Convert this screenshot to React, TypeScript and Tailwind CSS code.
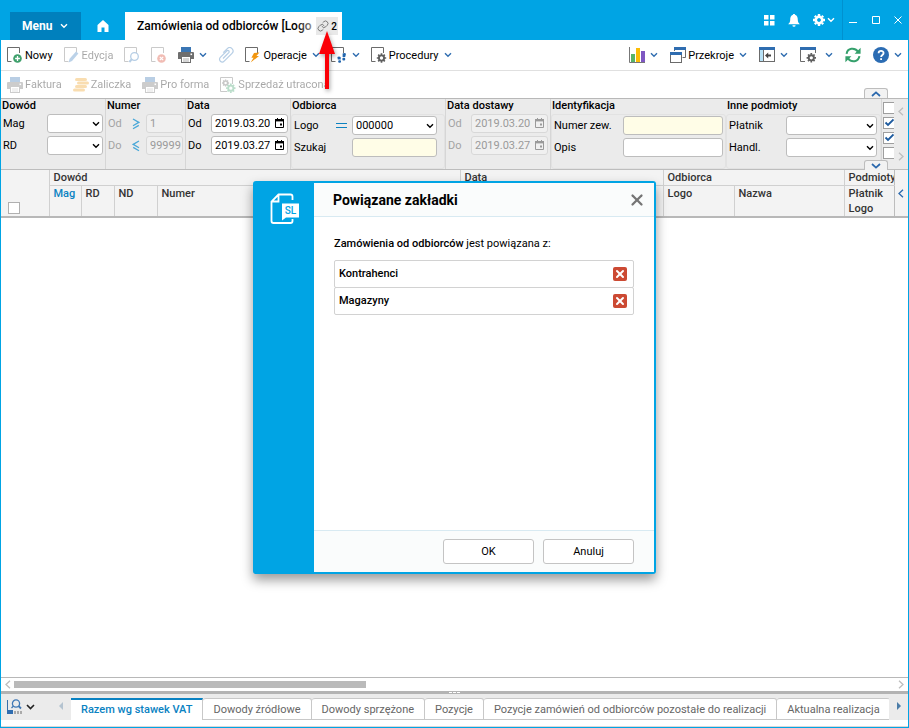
import type { ReactNode } from "react";
import clsx from "clsx";
import { Link, X } from "lucide-react";

// --- Icons ---
function Chevron({ className = "text-[#2f6db0]" }: { className?: string }) {
  return (
    <svg width="8" height="6" viewBox="0 0 8 6" fill="none" className={clsx("shrink-0", className)}>
      <path d="M1 1.2 L4 4.2 L7 1.2" stroke="currentColor" strokeWidth="1.4" />
    </svg>
  );
}

function AngleIcon({ flip, className }: { flip?: boolean; className?: string }) {
  return (
    <svg width="6" height="9" viewBox="0 0 6 9" fill="none" className={clsx("shrink-0", className)}>
      <path d={flip ? "M1 0.8 L5 4.5 L1 8.2" : "M5 0.8 L1 4.5 L5 8.2"} stroke="currentColor" strokeWidth="1.3" />
    </svg>
  );
}

function Icon({ children }: { children: ReactNode }) {
  return (
    <svg width="16" height="16" viewBox="0 0 16 16" fill="none" className="shrink-0">
      {children}
    </svg>
  );
}

const Page = () => (
  <path d="M4.5 14.5 H0.5 V0.5 H12.5 V6" stroke="#6b6b6b" strokeWidth="1" />
);

const NewIcon = () => (
  <Icon>
    <Page />
    <circle cx="10.5" cy="11.5" r="4.3" fill="#3fa06c" />
    <path d="M8.1 11.5 H12.9 M10.5 9.1 V13.9" stroke="#fff" strokeWidth="1.3" />
  </Icon>
);

const EditIcon = () => (
  <Icon>
    <Page />
    <path d="M4.6 15.4 L5.6 11.8 L12 4.6 L14.4 6.6 L8 14 Z" fill="#3f7fc0" />
  </Icon>
);

const SearchIcon = () => (
  <Icon>
    <Page />
    <circle cx="10.5" cy="9.5" r="3.8" stroke="#2f73b5" strokeWidth="1.3" />
    <path d="M7.8 12.2 L5.4 15" stroke="#2f73b5" strokeWidth="2" />
  </Icon>
);

const DeleteIcon = () => (
  <Icon>
    <Page />
    <circle cx="10.5" cy="11.5" r="4.3" fill="#d8432c" />
    <path d="M8.8 9.8 L12.2 13.2 M12.2 9.8 L8.8 13.2" stroke="#fff" strokeWidth="1.2" />
  </Icon>
);

const PrinterIcon = () => (
  <Icon>
    <rect x="3" y="0" width="10" height="5" fill="#3a76b4" />
    <path d="M1 5 H15 Q16 5 16 6 V12 H0 V6 Q0 5 1 5 Z" fill="#6e6e6e" />
    <rect x="12.5" y="6.5" width="1.6" height="1.6" fill="#fff" />
    <rect x="3.5" y="9.5" width="9" height="6" fill="#fff" stroke="#6e6e6e" />
    <path d="M5 12 H11 M5 14 H11" stroke="#9a9a9a" strokeWidth="0.8" />
  </Icon>
);

const ClipIcon = () => (
  <Icon>
    <path
      d="M5 11.5 L11 5.3 A1.3 1.3 0 0 0 9.2 3.6 L2.3 10.4 A2.7 2.7 0 0 0 6.2 14.2 L14 6.3 A3.3 3.3 0 0 0 9.3 1.6 L5.2 5.7"
      stroke="#2f73b5"
      strokeWidth="1.2"
    />
  </Icon>
);

const BoltIcon = () => (
  <Icon>
    <Page />
    <path d="M9 6 L14.4 5.4 L11.4 9 H14 L5.6 15.6 L8.6 10.8 H6.4 Z" fill="#f2960f" />
  </Icon>
);

const StepsIcon = () => (
  <Icon>
    <Page />
    <g fill="#2266ae">
      <path d="M6.4 10 Q8 9 9.6 10 L9.8 12.6 H6.8 Z" />
      <rect x="7.2" y="13.2" width="2.8" height="2.6" rx="1" />
      <path d="M11.6 6.6 Q13.6 5.2 15 6.8 L14.2 10 H11.6 Z" />
      <rect x="11.4" y="10.8" width="2.8" height="2.6" rx="1" />
    </g>
  </Icon>
);

const Cog = ({ x, y, color = "#5f5f5f" }: { x: number; y: number; color?: string }) => (
  <g transform={`translate(${x} ${y})`}>
    <circle r="2.6" stroke={color} strokeWidth="1.9" fill="none" />
    <path
      d="M0 -4.7 V-3 M0 3 V4.7 M-4.7 0 H-3 M3 0 H4.7 M-3.3 -3.3 L-2.1 -2.1 M2.1 2.1 L3.3 3.3 M-3.3 3.3 L-2.1 2.1 M2.1 -2.1 L3.3 -3.3"
      stroke={color}
      strokeWidth="1.7"
    />
  </g>
);

const ProcedureIcon = () => (
  <Icon>
    <Page />
    <Cog x={10.5} y={11} />
  </Icon>
);

const ChartIcon = () => (
  <Icon>
    <path d="M0.5 0 V15.5 H16" stroke="#777" />
    <rect x="2" y="7" width="4" height="8" fill="#58b368" />
    <rect x="7" y="1" width="4" height="14" fill="#fbbc05" />
    <rect x="12" y="4" width="4" height="11" fill="#7e57c2" />
  </Icon>
);

const WindowsIcon = () => (
  <Icon>
    <path d="M4.5 4 V0.5 H15.5 V10.5 H12.5" stroke="#6b6b6b" />
    <rect x="4" y="0" width="12" height="3" fill="#2f6db0" />
    <rect x="0.5" y="5.5" width="11" height="10" fill="#fff" stroke="#6b6b6b" />
    <rect x="0" y="5" width="12" height="3" fill="#2f6db0" />
  </Icon>
);

const PanelIcon = () => (
  <Icon>
    <rect x="0.5" y="0.5" width="15" height="14" fill="#fff" stroke="#6b6b6b" />
    <rect x="1" y="3" width="3" height="11" fill="#b8e2f7" />
    <rect x="0" y="0" width="16" height="3" fill="#2f6db0" />
    <path d="M4.5 3 V14" stroke="#6b6b6b" />
    <path d="M6 8.5 L9.2 5.6 V7.6 H12 V9.4 H9.2 V11.4 Z" fill="#444" />
  </Icon>
);

const WindowGearIcon = () => (
  <Icon>
    <path d="M5 14.5 H0.5 V1 M15.5 1 V6" stroke="#6b6b6b" />
    <rect x="0" y="0" width="16" height="3" fill="#2f6db0" />
    <Cog x={11.3} y={10.8} />
  </Icon>
);

const RefreshIcon = () => (
  <Icon>
    <path d="M1.6 6.8 C2.5 1 9.5 0 13 4.6 M14.4 9.2 C13.5 15 6.5 16 3 11.4" stroke="#35a06c" strokeWidth="2" />
    <path d="M15.6 0.8 V6.8 H9.6 Z M0.4 15.2 V9.2 H6.4 Z" fill="#35a06c" />
  </Icon>
);

const HelpIcon = () => (
  <Icon>
    <circle cx="8" cy="8" r="8" fill="#2b6cb3" />
    <path d="M5.6 6.2 C5.6 3.2 10.6 3.2 10.6 6 C10.6 8 8.1 7.9 8.1 10" stroke="#fff" strokeWidth="1.8" />
    <rect x="7.2" y="11.2" width="1.8" height="1.8" fill="#fff" />
  </Icon>
);

const CoinsIcon = () => (
  <Icon>
    <g fill="#f0a020">
      <rect x="2" y="1" width="12" height="3" rx="1.5" />
      <rect x="4" y="4.5" width="12" height="3" rx="1.5" />
      <rect x="2" y="8" width="12" height="3" rx="1.5" />
      <rect x="0" y="11.5" width="12" height="3" rx="1.5" />
    </g>
  </Icon>
);

const LostSaleIcon = () => (
  <Icon>
    <path d="M7 14.5 H0.5 V0.5 H12.5 V7" stroke="#6b6b6b" />
    <g transform="translate(5.6 6) scale(0.75)">
      <Cog x={0} y={0} />
    </g>
    <Cog x={10.8} y={11.2} color="#3fa06c" />
  </Icon>
);

const CalendarIcon = () => (
  <svg
    width="9"
    height="10"
    viewBox="0 0 9 10"
    fill="none"
    className="pointer-events-none absolute top-1 right-1"
  >
    <path d="M0.5 1.5 H8.5 V9.5 H0.5 Z M2.5 0 V2 M6.5 0 V2" stroke="currentColor" />
    <path d="M0 1 H9 V3.4 H0 Z" fill="currentColor" />
    <rect x="5" y="5.5" width="2" height="2" fill="currentColor" />
  </svg>
);

const CompareIcon = ({ less }: { less?: boolean }) => (
  <svg width="8" height="12" viewBox="0 0 8 12" fill="none" className="shrink-0">
    <g transform={less ? "matrix(-1 0 0 1 8 0)" : undefined} stroke="#4aa8d8" strokeWidth="1.3">
      <path d="M1 1 L6.8 4.4 L1 7.8 M1 10.8 L6.8 7.4" />
    </g>
  </svg>
);

const EqualsIcon = () => (
  <svg width="11" height="5" viewBox="0 0 11 5" fill="#0d82c0" className="shrink-0">
    <path d="M0 0 H11 V1 H0 Z M0 4 H11 V5 H0 Z" />
  </svg>
);

const DocumentLogo = () => (
  <svg width="30" height="32" viewBox="0 0 30 32" fill="none">
    <path
      d="M22.5 7 V3.5 Q22.5 1.5 20.5 1.5 H8.5 L1.5 8.5 V28 Q1.5 30 3.5 30 H20.5 Q22.5 30 22.5 28 V26 M8.5 1.5 V8.5 H1.5"
      stroke="#fff"
      strokeWidth="1.8"
    />
    <path d="M12 10.5 H29 V24.5 H16 L12 27.5 Z" fill="#fff" />
    <text x="20.5" y="21" textAnchor="middle" fontSize="10" fontWeight="500" fill="#00a4e4">
      SL
    </text>
  </svg>
);

// --- Toolbar ---
interface ToolProps {
  label: string;
  icon?: ReactNode;
  showLabel?: boolean;
  disabled?: boolean;
  menu?: boolean;
}

function Tool({ label, icon, showLabel, disabled, menu }: ToolProps) {
  return (
    <button
      type="button"
      aria-label={label}
      disabled={disabled}
      className="flex shrink-0 items-center whitespace-nowrap disabled:opacity-35"
    >
      {icon}
      {showLabel && <span className="ml-[2px] pt-[2px]">{label}</span>}
      {menu && <Chevron className="ml-[5px] text-[#2f6db0]" />}
    </button>
  );
}

// --- Filter fields ---
const fieldClass =
  "block h-[19px] w-full rounded-[3px] border border-[#bdbdbd] pl-[3px] text-[11px] leading-4 text-black disabled:border-[#d8d8d8] disabled:bg-[#f0f0f0] disabled:text-[#9a9a9a]";

interface GroupProps {
  title: string;
  className: string;
  boxed?: boolean;
  bodyClass?: string;
  children: ReactNode;
}

function Group({ title, className, boxed, bodyClass, children }: GroupProps) {
  return (
    <div role="group" aria-label={title} className={clsx("flex shrink-0 flex-col border-[#d6d6d6]", className)}>
      <div className="h-[15px] shrink-0 pl-px leading-[13px] font-medium whitespace-nowrap">{title}</div>
      <div
        className={clsx(
          "flex flex-1 flex-col gap-[3px]",
          boxed && "rounded-[3px] border border-[#e2e2e2] pt-px",
          bodyClass
        )}
      >
        {children}
      </div>
    </div>
  );
}

interface FieldProps {
  label: string;
  id: string;
  width: string;
  sign?: ReactNode;
  muted?: boolean;
  children: ReactNode;
}

function Field({ label, id, width, sign, muted, children }: FieldProps) {
  return (
    <div className="flex items-center pr-[2px] pl-[2px]">
      <label htmlFor={id} className={clsx("flex-1 pt-px whitespace-nowrap", muted && "text-[#a3a3a3]")}>
        {label}
      </label>
      {sign}
      <div className={clsx("relative shrink-0", width)}>{children}</div>
    </div>
  );
}

function Select({ id, value = "" }: { id: string; value?: string }) {
  return (
    <>
      <select id={id} className={clsx(fieldClass, "appearance-none bg-white")} defaultValue={value}>
        <option value={value}>{value}</option>
      </select>
      <Chevron className="pointer-events-none absolute top-[7px] right-[3px] text-black" />
    </>
  );
}

function DateField({ id, value, disabled }: { id: string; value: string; disabled?: boolean }) {
  return (
    <div className={disabled ? "text-[#9a9a9a]" : "text-black"}>
      <input id={id} type="text" defaultValue={value} disabled={disabled} className={clsx(fieldClass, "bg-white")} />
      <CalendarIcon />
    </div>
  );
}

function Check({ label, checked }: { label: string; checked?: boolean }) {
  return (
    <label className="relative block h-3 w-3 shrink-0">
      <input
        type="checkbox"
        aria-label={label}
        defaultChecked={checked}
        className="peer block h-3 w-3 appearance-none border border-[#9e9e9e] bg-white"
      />
      <svg
        width="12"
        height="12"
        viewBox="0 0 12 12"
        fill="none"
        className="pointer-events-none absolute inset-0 hidden peer-checked:block"
      >
        <path d="M2.5 5.5 L5 8 L10.5 2.5" stroke="#1d5a9e" strokeWidth="1.8" />
      </svg>
    </label>
  );
}

function Notch({ up }: { up?: boolean }) {
  return (
    <button
      type="button"
      aria-label={up ? "Zwiń" : "Rozwiń"}
      className="flex h-[10px] w-6 items-center justify-center rounded-t-[3px] border border-b-0 border-[#bdbdbd] bg-[#f2f2f2]"
    >
      <svg width="10" height="6" viewBox="0 0 10 6" fill="none">
        <path d={up ? "M1 5 L5 1.4 L9 5" : "M1 1 L5 4.6 L9 1"} stroke="#2a68ad" strokeWidth="1.7" />
      </svg>
    </button>
  );
}

// --- Main blocks ---
function TitleBar() {
  return (
    <header className="flex h-10 items-end bg-[#00a4e4] pl-[9px] text-white">
      <button type="button" className="flex h-7 w-[71px] shrink-0 items-center bg-[#0080bd] pl-3 text-xs font-bold">
        Menu
        <Chevron className="ml-2 text-white" />
      </button>
      <button type="button" aria-label="Start" className="flex h-7 w-11 shrink-0 items-center justify-center">
        <svg width="12" height="12" viewBox="0 0 12 12" fill="#fff">
          <path d="M6 0 L11.5 5 V12 H7.5 V7.5 H4.5 V12 H0.5 V5 Z" />
        </svg>
      </button>
      <div className="flex h-7 w-[217px] shrink-0 items-center bg-white pr-1 pl-3 text-black">
        <div className="relative flex-1 overflow-hidden text-xs font-medium whitespace-nowrap">
          Zamówienia od odbiorców [Logo
          <div className="absolute inset-y-0 right-0 w-5 bg-linear-to-r from-transparent to-white/70" />
        </div>
        <button
          type="button"
          className="flex h-[18px] w-[22px] shrink-0 items-center justify-center gap-[2px] bg-[#e9e9e9] text-[10px] font-medium"
        >
          <Link size={12} strokeWidth={2} className="text-[#7a7a7a]" />2
        </button>
      </div>
      <div className="ml-auto flex h-10 items-center">
        <button type="button" aria-label="Aplikacje" className="mr-[13px]">
          <svg width="11" height="11" viewBox="0 0 11 11" fill="#fff">
            <path d="M0 0 H4.5 V4.5 H0 Z M6 0 H10.5 V4.5 H6 Z M0 6 H4.5 V10.5 H0 Z M6 6 H10.5 V10.5 H6 Z" />
          </svg>
        </button>
        <button type="button" aria-label="Powiadomienia" className="mr-[13px]">
          <svg width="12" height="13" viewBox="0 0 12 13" fill="#fff">
            <path d="M5 0.8 A1 1 0 0 1 7 0.8 C9.3 1.5 9.8 3.4 9.8 6 C9.8 8 10.6 9 11.8 10.3 H0.2 C1.4 9 2.2 8 2.2 6 C2.2 3.4 2.7 1.5 5 0.8 Z M4.4 11.2 H7.6 A1.6 1.6 0 0 1 4.4 11.2 Z" />
          </svg>
        </button>
        <button type="button" aria-label="Ustawienia" className="mr-[7px] flex items-center gap-[2px]">
          <svg width="12" height="12" viewBox="-6 -6 12 12" fill="none">
            <circle r="3.2" stroke="#fff" strokeWidth="2.6" />
            <path
              d="M0 -6 V-4 M0 4 V6 M-6 0 H-4 M4 0 H6 M-4.2 -4.2 L-3 -3 M3 3 L4.2 4.2 M-4.2 4.2 L-3 3 M3 -3 L4.2 -4.2"
              stroke="#fff"
              strokeWidth="2.4"
            />
          </svg>
          <Chevron className="text-white" />
        </button>
        <div className="flex h-10 w-[66px] items-center justify-between border-l border-[#0091cf] pr-[6px] pl-[6px]">
          <button type="button" aria-label="Minimalizuj">
            <svg width="8" height="8" viewBox="0 0 8 8" stroke="#fff">
              <path d="M0 6.5 H8" />
            </svg>
          </button>
          <button type="button" aria-label="Maksymalizuj">
            <svg width="8" height="9" viewBox="0 0 8 9" fill="none" stroke="#fff">
              <path d="M0.5 0.5 H7.5 V7.5 H0.5 Z" />
            </svg>
          </button>
          <button type="button" aria-label="Zamknij okno">
            <svg width="8" height="8" viewBox="0 0 8 8" stroke="#fff">
              <path d="M0.5 0.5 L7.5 7.5 M7.5 0.5 L0.5 7.5" />
            </svg>
          </button>
        </div>
      </div>
    </header>
  );
}

function Toolbars() {
  return (
    <>
      <div className="flex h-[31px] items-center justify-between border-b border-[#e0e0e0] px-[6px]">
        <div className="flex items-center gap-[11px]">
          <Tool label="Nowy" icon={<NewIcon />} showLabel />
          <Tool label="Edycja" icon={<EditIcon />} showLabel disabled />
          <Tool label="Podgląd" icon={<SearchIcon />} disabled />
          <Tool label="Usuń" icon={<DeleteIcon />} disabled />
          <div className="flex items-center">
            <Tool label="Drukuj" icon={<PrinterIcon />} />
            <Tool label="Opcje drukowania" menu />
          </div>
          <Tool label="Załączniki" icon={<ClipIcon />} disabled />
          <Tool label="Operacje" icon={<BoltIcon />} showLabel menu />
          <Tool label="Ścieżka" icon={<StepsIcon />} menu />
          <Tool label="Procedury" icon={<ProcedureIcon />} showLabel menu />
        </div>
        <div className="flex items-center gap-3">
          <Tool label="Wykres" icon={<ChartIcon />} menu />
          <Tool label="Przekroje" icon={<WindowsIcon />} showLabel menu />
          <Tool label="Panele" icon={<PanelIcon />} menu />
          <div className="flex items-center gap-1">
            <Tool label="Ustawienia okna" icon={<WindowGearIcon />} />
            <Tool label="Opcje okna" menu />
          </div>
          <Tool label="Odśwież" icon={<RefreshIcon />} />
          <Tool label="Pomoc" icon={<HelpIcon />} menu />
        </div>
      </div>
      <div className="flex h-7 items-center justify-between border-b border-[#b8b8b8] px-[6px]">
        <div className="flex items-center gap-[11px]">
          <Tool label="Faktura" icon={<PrinterIcon />} showLabel disabled />
          <Tool label="Zaliczka" icon={<CoinsIcon />} showLabel disabled />
          <Tool label="Pro forma" icon={<PrinterIcon />} showLabel disabled />
          <Tool label="Sprzedaż utracona" icon={<LostSaleIcon />} showLabel disabled />
        </div>
        <div className="mr-[14px] self-end">
          <Notch up />
        </div>
      </div>
    </>
  );
}

function Filters() {
  return (
    <form className="flex h-[71px] border-b border-[#bdbdbd] bg-[#ebebeb]">
      <Group title="Dowód" className="w-[105px] border-r">
        <Field label="Mag" id="mag" width="w-14">
          <Select id="mag" />
        </Field>
        <Field label="RD" id="rd" width="w-14">
          <Select id="rd" />
        </Field>
      </Group>
      <Group title="Numer" className="w-20 border-r">
        <Field label="Od" id="num-from" width="ml-[6px] w-[37px]" sign={<CompareIcon />} muted>
          <input id="num-from" type="text" defaultValue="1" disabled className={fieldClass} />
        </Field>
        <Field label="Do" id="num-to" width="ml-[6px] w-[37px]" sign={<CompareIcon less />} muted>
          <input id="num-to" type="text" defaultValue="99999" disabled className={fieldClass} />
        </Field>
      </Group>
      <Group title="Data" className="w-[105px] border-r">
        <Field label="Od" id="date-from" width="w-[77px]">
          <DateField id="date-from" value="2019.03.20" />
        </Field>
        <Field label="Do" id="date-to" width="w-[77px]">
          <DateField id="date-to" value="2019.03.27" />
        </Field>
      </Group>
      <Group title="Odbiorca" className="w-[155px] border-r" boxed bodyClass="pr-[5px]">
        <Field label="Logo" id="logo" width="ml-[5px] w-[85px]" sign={<EqualsIcon />}>
          <Select id="logo" value="000000" />
        </Field>
        <Field label="Szukaj" id="search" width="w-[85px]">
          <input id="search" type="text" className={clsx(fieldClass, "bg-[#fffde7]")} />
        </Field>
      </Group>
      <Group title="Data dostawy" className="w-[105px] border-r">
        <Field label="Od" id="delivery-from" width="w-[77px]" muted>
          <DateField id="delivery-from" value="2019.03.20" disabled />
        </Field>
        <Field label="Do" id="delivery-to" width="w-[77px]" muted>
          <DateField id="delivery-to" value="2019.03.27" disabled />
        </Field>
      </Group>
      <Group title="Identyfikacja" className="w-[175px]" boxed>
        <Field label="Numer zew." id="ext-number" width="w-[100px]">
          <input id="ext-number" type="text" className={clsx(fieldClass, "bg-[#fffde7]")} />
        </Field>
        <Field label="Opis" id="description" width="w-[100px]">
          <input id="description" type="text" className={clsx(fieldClass, "bg-white")} />
        </Field>
      </Group>
      <Group title="Inne podmioty" className="w-[155px]" boxed bodyClass="pr-px">
        <Field label="Płatnik" id="payer" width="w-[91px]">
          <Select id="payer" />
        </Field>
        <Field label="Handl." id="trader" width="w-[91px]">
          <Select id="trader" />
        </Field>
      </Group>
      <div className="flex min-w-0 flex-1 justify-between">
        <div className="flex w-[13px] flex-col gap-[3px] overflow-hidden border-l border-[#d6d6d6] pt-[3px] pl-px">
          <Check label="Bufor" />
          <Check label="Zatwierdzone" checked />
          <Check label="Do realizacji" checked />
          <Check label="Zrealizowane" />
        </div>
        <div className="flex w-[14px] flex-col items-center justify-between py-2 text-[#bdbdbd]">
          <AngleIcon />
          <AngleIcon flip />
        </div>
      </div>
    </form>
  );
}

function GridHeader() {
  const head = "border-l border-[#d0d0d0] pl-1 text-left align-top font-medium overflow-hidden whitespace-nowrap";
  return (
    <table className="w-full table-fixed border-collapse border-b-2 border-[#b8b8b8] bg-[#f3f3f3] text-[#333]">
      <colgroup>
        <col className="w-12" />
        <col className="w-8" />
        <col className="w-[33px]" />
        <col className="w-[43px]" />
        <col />
        <col className="w-[203px]" />
        <col className="w-[71px]" />
        <col className="w-[110px]" />
        <col className="w-[50px]" />
        <col className="w-[14px]" />
      </colgroup>
      <thead>
        <tr className="leading-[15px]">
          <th rowSpan={2} className="pb-[2px] pl-[7px] text-left align-bottom">
            <input
              type="checkbox"
              aria-label="Zaznacz wszystkie"
              className="block h-3 w-3 appearance-none border border-[#b0b0b0] bg-white"
            />
          </th>
          <th colSpan={4} className={clsx(head, "border-b")}>Dowód</th>
          <th className={clsx(head, "border-b")}>Data</th>
          <th colSpan={2} className={clsx(head, "border-b")}>Odbiorca</th>
          <th className={clsx(head, "border-b")}>Podmioty</th>
          <th rowSpan={2} className="border-l border-[#bdbdbd] text-[#2a68ad]">
            <AngleIcon className="mx-auto" />
          </th>
        </tr>
        <tr className="leading-[15px]">
          <th className={clsx(head, "text-[#0a82c2]")}>Mag</th>
          <th className={head}>RD</th>
          <th className={head}>ND</th>
          <th className={head}>Numer</th>
          <th className={head} />
          <th className={head}>Logo</th>
          <th className={head}>Nazwa</th>
          <th className={head}>
            Płatnik
            <br />
            Logo
          </th>
        </tr>
      </thead>
    </table>
  );
}

const detailTabs = [
  "Razem wg stawek VAT",
  "Dowody źródłowe",
  "Dowody sprzężone",
  "Pozycje",
  "Pozycje zamówień od odbiorców pozostałe do realizacji",
  "Aktualna realizacja",
];

function DetailTabs() {
  return (
    <footer>
      <div className="flex h-[14px] items-center border-t border-[#b8b8b8] px-1 text-[#bdbdbd]">
        <AngleIcon />
        <div className="mx-[3px] flex-1">
          <div className="h-[7px] w-[40%] bg-[#bababa]" />
        </div>
        <AngleIcon flip />
      </div>
      <div className="flex h-[3px] items-center justify-center gap-px bg-[#b3b3b3]">
        <span className="h-px w-[3px] bg-white" />
        <span className="h-px w-[3px] bg-white" />
        <span className="h-px w-[3px] bg-white" />
      </div>
      <div className="flex h-[26px] items-stretch bg-[#ebebeb] text-[#666]">
        <button type="button" aria-label="Podgląd danych" className="flex w-[52px] shrink-0 items-center gap-1 pl-[6px]">
          <svg width="15" height="16" viewBox="0 0 15 16" fill="none">
            <path d="M0.5 1 V15" stroke="#3a6ea8" />
            <rect x="0" y="11" width="6" height="4" fill="#2f6db0" />
            <path d="M7 12 H9 V15 H7 Z M10 12 H12 V15 H10 Z M13 12 H15 V15 H13 Z" fill="#aaa" />
            <circle cx="9" cy="4.5" r="3.6" stroke="#3f78b5" strokeWidth="1.3" />
            <path d="M11.5 7 L14 9.5" stroke="#3f78b5" strokeWidth="1.8" />
            <path d="M6.5 7 L4.5 9" stroke="#3f78b5" strokeWidth="1.2" />
          </svg>
          <svg width="9" height="6" viewBox="0 0 9 6" fill="none">
            <path d="M1 1 L4.5 4.5 L8 1" stroke="#222" strokeWidth="1.6" />
          </svg>
        </button>
        <button type="button" aria-label="Poprzednie zakładki" className="flex w-[18px] shrink-0 items-start pt-2 pl-[6px]">
          <svg width="4" height="8" viewBox="0 0 4 8" fill="#b4c3d0">
            <path d="M4 0 V8 L0 4 Z" />
          </svg>
        </button>
        <nav role="tablist" className="mt-1 flex min-w-0 flex-1 overflow-hidden">
          {detailTabs.map((tab, i) => (
            <button
              key={tab}
              type="button"
              role="tab"
              aria-selected={i === 0}
              className={clsx(
                "shrink-0 border-r bg-white px-[10px] whitespace-nowrap last:border-r-0",
                i === 0
                  ? "border-t-2 border-r-[#c8c8c8] border-t-[#0a82c2] font-medium text-[#0a82c2]"
                  : "rounded-t-[3px] border-t border-b border-[#c8c8c8] pt-[2px]"
              )}
            >
              {tab}
            </button>
          ))}
        </nav>
        <button type="button" aria-label="Następne zakładki" className="flex w-[19px] shrink-0 items-start justify-center pt-2">
          <svg width="4" height="8" viewBox="0 0 4 8" fill="#4b7da8">
            <path d="M0 0 V8 L4 4 Z" />
          </svg>
        </button>
      </div>
      <div className="h-[7px] border-b border-[#d8d8d8] bg-white" />
    </footer>
  );
}

const linkedTabs = ["Kontrahenci", "Magazyny"];

function LinkedTabsDialog() {
  return (
    <div className="absolute inset-0 flex items-start justify-center pt-[181px]">
      <div
        role="dialog"
        aria-labelledby="dialog-title"
        className="flex w-[403px] rounded-[3px] border-2 border-[#00a4e4] bg-[#00a4e4] shadow-[0_6px_12px_rgba(0,0,0,0.4)]"
      >
        <div className="flex w-[59px] shrink-0 justify-center pt-[10px]">
          <DocumentLogo />
        </div>
        <div className="flex min-h-[389px] flex-1 flex-col rounded-[2px] bg-white">
          <div className="flex h-[34px] items-center justify-between border-b border-[#d8eaf2] bg-[#fafcfc] pr-2 pl-[19px]">
            <h2 id="dialog-title" className="text-sm font-bold">
              Powiązane zakładki
            </h2>
            <button type="button" aria-label="Zamknij">
              <X size={18} strokeWidth={3} className="text-[#757575]" />
            </button>
          </div>
          <div className="flex-1 px-5 pt-[19px]">
            <p className="leading-4">
              <strong className="font-medium">Zamówienia od odbiorców</strong> jest powiązana z:
            </p>
            <ul className="mt-2">
              {linkedTabs.map((name) => (
                <li
                  key={name}
                  className="flex h-7 items-center justify-between rounded-[2px] border border-[#d2d2d2] pr-[6px] pl-1 font-medium not-first:-mt-px"
                >
                  {name}
                  <button
                    type="button"
                    aria-label={`Usuń ${name}`}
                    className="flex h-[14px] w-[14px] items-center justify-center rounded-[2px] bg-[#cc4a33] text-white"
                  >
                    <X size={12} strokeWidth={4} />
                  </button>
                </li>
              ))}
            </ul>
          </div>
          <div className="flex h-[42px] items-center justify-end gap-[9px] border-t border-[#d8eaf2] bg-[#fafcfc] px-5">
            <button type="button" className="h-[25px] w-[91px] rounded-[3px] border border-[#c4c4c4] bg-white pt-px">
              OK
            </button>
            <button type="button" className="h-[25px] w-[91px] rounded-[3px] border border-[#c4c4c4] bg-white pt-px">
              Anuluj
            </button>
          </div>
        </div>
      </div>
    </div>
  );
}

export default function App() {
  return (
    <div className="relative flex min-h-screen flex-col overflow-hidden border-x border-b border-[#00a4e4] bg-white font-[Roboto,sans-serif] text-[11px] text-black">
      <TitleBar />
      <Toolbars />
      <div className="relative">
        <Filters />
        <div className="absolute right-5 bottom-0">
          <Notch />
        </div>
      </div>
      <GridHeader />
      <main className="flex-1" />
      <DetailTabs />
      <LinkedTabsDialog />

      {/* Pointer to the linked tabs badge */}
      <svg
        width="22"
        height="62"
        viewBox="0 0 22 62"
        className="pointer-events-none absolute top-[30px] left-[315px] drop-shadow-[1px_2px_2px_rgba(0,0,0,0.35)]"
      >
        <path d="M11 1 L19 24 H13 V59 H9 V24 H3 Z" fill="#fb0007" />
      </svg>
    </div>
  );
}
